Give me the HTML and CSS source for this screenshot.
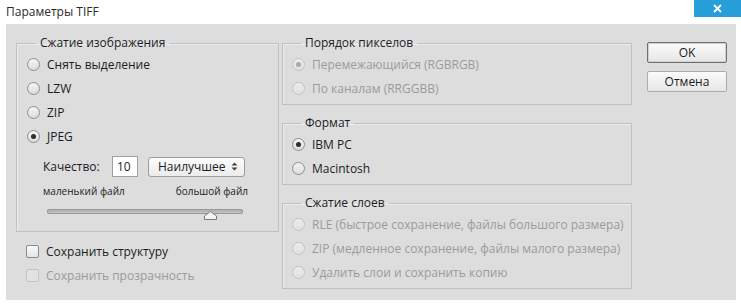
FILE: index.html
```html
<!DOCTYPE html>
<html lang="ru">
<head>
    <meta charset="UTF-8">
    <meta name="viewport" content="width=device-width, initial-scale=1.0">
    <title>Параметры TIFF</title>
    <link rel="stylesheet" href="styles.css">
</head>
<body>
    <div class="window">
        <div class="titlebar">
            <span class="title">Параметры TIFF</span>
            <button class="close" aria-label="Закрыть">
                <svg width="9" height="9" viewBox="0 0 9 9"><path d="M1 1 L8 8 M8 1 L1 8" stroke="#fff" stroke-width="1.8"/></svg>
            </button>
        </div>

        <div class="panel">
            <div class="col-left">
                <fieldset class="group group-image">
                    <legend>Сжатие изображения</legend>
                    <label class="opt"><span class="radio"></span>Снять выделение</label>
                    <label class="opt"><span class="radio"></span>LZW</label>
                    <label class="opt"><span class="radio"></span>ZIP</label>
                    <label class="opt"><span class="radio checked"></span>JPEG</label>

                    <div class="quality">
                        <span class="quality-label">Качество:</span>
                        <span class="field">10</span>
                        <span class="select">Наилучшее
                            <svg class="select-arrow" width="7" height="9" viewBox="0 0 7 9"><path d="M3.5 0.5 L6.5 3.5 H0.5 Z M3.5 8.5 L6.5 5.5 H0.5 Z" fill="#444"/></svg>
                        </span>
                    </div>
                    <div class="range-labels">
                        <span>маленький файл</span>
                        <span>большой файл</span>
                    </div>
                    <div class="slider">
                        <div class="track"></div>
                        <svg class="thumb" width="13" height="9" viewBox="0 0 13 9"><path d="M6.5 0.5 L12.5 5 V8.5 H0.5 V5 Z" fill="#f4f4f4" stroke="#7a7a7a"/></svg>
                    </div>
                </fieldset>

                <label class="check"><span class="box"></span>Сохранить структуру</label>
                <label class="check disabled"><span class="box"></span>Сохранить прозрачность</label>
            </div>

            <div class="col-mid">
                <fieldset class="group">
                    <legend>Порядок пикселов</legend>
                    <label class="opt disabled"><span class="radio checked"></span>Перемежающийся (RGBRGB)</label>
                    <label class="opt disabled"><span class="radio"></span>По каналам (RRGGBB)</label>
                </fieldset>

                <fieldset class="group">
                    <legend>Формат</legend>
                    <label class="opt"><span class="radio checked"></span>IBM PC</label>
                    <label class="opt"><span class="radio"></span>Macintosh</label>
                </fieldset>

                <fieldset class="group">
                    <legend>Сжатие слоев</legend>
                    <label class="opt disabled"><span class="radio"></span>RLE (быстрое сохранение, файлы большого размера)</label>
                    <label class="opt disabled"><span class="radio"></span>ZIP (медленное сохранение, файлы малого размера)</label>
                    <label class="opt disabled"><span class="radio"></span>Удалить слои и сохранить копию</label>
                </fieldset>
            </div>

            <div class="col-buttons">
                <button class="btn default">OK</button>
                <button class="btn">Отмена</button>
            </div>
        </div>
    </div>
</body>
</html>
```

FILE: styles.css
```css
body {
    margin: 0;
    background: #fff;
    font-family: 'Open Sans', 'Noto Sans', sans-serif;
    font-size: 12px;
    color: #1c1c24;
}

.window {
    width: 741px;
    height: 307px;
    background: #fff;
}

.titlebar {
    height: 24px;
    display: flex;
    justify-content: space-between;
    align-items: flex-start;
}

.title {
    padding: 3px 0 0 6px;
    font-size: 12px;
    color: #2b2b2b;
}

.close {
    width: 47px;
    height: 17px;
    border: none;
    padding: 0;
    background: #27a0da;
    display: flex;
    justify-content: center;
    align-items: center;
}

.panel {
    margin: 0 5px 0 6px;
    height: 276px;
    box-sizing: border-box;
    padding: 11px 0 0 10px;
    background: #dddddd;
    display: flex;
    align-items: flex-start;
}

.col-left {
    width: 263px;
    margin-right: 3px;
}

.col-mid {
    width: 350px;
    margin-right: 15px;
}

.col-buttons {
    width: 80px;
    padding-top: 7px;
    display: flex;
    flex-direction: column;
    gap: 8px;
}

/* group boxes */
.group {
    margin: 0;
    min-width: 0;
    padding: 1px 0 4px 9px;
    border: 1px solid #c0c0c0;
    box-shadow: inset 1px 1px 0 #ececec;
}

.group + .group {
    margin-top: 10px;
}

.group-image {
    padding: 1px 0 10px 10px;
}

legend {
    margin-left: 9px;
    padding: 0 4px;
    line-height: 16px;
    color: #1c1c24;
}

.opt {
    height: 24px;
    display: flex;
    align-items: center;
    gap: 7px;
    white-space: nowrap;
}

.opt.disabled {
    color: #9b9b9b;
}

.radio {
    width: 13px;
    height: 13px;
    box-sizing: border-box;
    border: 1px solid #8e8e8e;
    border-radius: 50%;
    background: linear-gradient(#f4f4f4, #dcdcdc);
    display: flex;
    justify-content: center;
    align-items: center;
    flex-shrink: 0;
}

.radio.checked::after {
    content: '';
    width: 5px;
    height: 5px;
    border-radius: 50%;
    background: #2e2e2e;
}

.opt.disabled .radio {
    border-color: #c2c2c2;
    background: linear-gradient(#ececec, #e0e0e0);
}

.opt.disabled .radio.checked::after {
    background: #a8a8a8;
}

/* quality */
.quality {
    margin-top: 8px;
    height: 21px;
    display: flex;
    align-items: center;
    padding-left: 16px;
}

.quality-label {
    width: 69px;
}

.field {
    width: 26px;
    height: 21px;
    box-sizing: border-box;
    border: 1px solid #9f9f9f;
    background: #fff;
    padding-left: 4px;
    line-height: 19px;
}

.select {
    margin-left: 10px;
    width: 97px;
    height: 20px;
    box-sizing: border-box;
    border: 1px solid #9c9c9c;
    border-radius: 3px;
    background: linear-gradient(#fbfbfb, #ececec);
    padding: 0 6px 0 9px;
    display: flex;
    align-items: center;
    justify-content: space-between;
}

.range-labels {
    margin-top: 7px;
    width: 205px;
    margin-left: 16px;
    display: flex;
    justify-content: space-between;
    font-size: 10px;
    line-height: 14px;
}

.slider {
    margin: 5px 0 0 20px;
    width: 196px;
    height: 18px;
    position: relative;
}

.track {
    position: absolute;
    top: 6px;
    left: 0;
    right: 0;
    height: 5px;
    border-radius: 3px;
    background: linear-gradient(#a9a9a9, #c9c9c9);
    box-shadow: inset 0 0 0 1px #9a9a9a;
}

.thumb {
    position: absolute;
    left: 157px;
    top: 8px;
}

/* checkboxes */
.check {
    height: 24px;
    display: flex;
    align-items: center;
    gap: 7px;
    padding-left: 10px;
}

.check:first-of-type {
    margin-top: 7px;
}

.box {
    width: 13px;
    height: 13px;
    box-sizing: border-box;
    border: 1px solid #8a8a8a;
    border-radius: 2px;
    background: linear-gradient(#fafafa, #e4e4e4);
}

.check.disabled {
    color: #9b9b9b;
}

.check.disabled .box {
    border-color: #c4c4c4;
    background: #e2e2e2;
}

/* buttons */
.btn {
    height: 21px;
    padding: 0;
    font-family: 'Open Sans', 'Noto Sans', sans-serif;
    font-size: 12px;
    color: #1c1c24;
    border: 1px solid #acacac;
    border-radius: 2px;
    background: linear-gradient(#fbfbfb, #e6e6e6);
}

.btn.default {
    border-color: #707070;
    box-shadow: inset 0 0 0 1px #d0d0d0;
}
```
